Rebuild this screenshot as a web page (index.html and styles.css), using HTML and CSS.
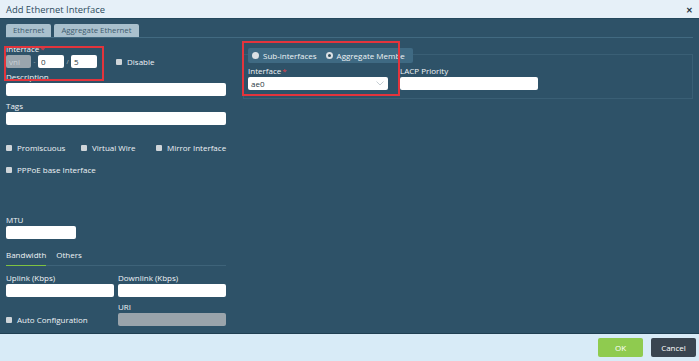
FILE: index.html
```html
<!DOCTYPE html>
<html lang="en">

<head>
    <meta charset="UTF-8">
    <meta name="viewport" content="width=device-width, initial-scale=1.0">
    <title>Add Ethernet Interface</title>
    <link rel="stylesheet" href="styles.css">
</head>

<body>
    <div class="dialog">
        <div class="dialog-header">
            <span class="title">Add Ethernet Interface</span>
            <span class="close">&#10005;</span>
        </div>

        <div class="dialog-body">
            <div class="tabs">
                <span class="tab">Ethernet</span>
                <span class="tab">Aggregate Ethernet</span>
            </div>

            <div class="columns">
                <div class="left-col">
                    <label class="field-label first">Interface<span class="req">*</span></label>
                    <div class="iface-row">
                        <input class="box vni" type="text" value="vni" disabled>
                        <span class="sep">-</span>
                        <input class="box short" type="text" value="0">
                        <span class="sep">/</span>
                        <input class="box short" type="text" value="5">
                        <span class="check disable"><span class="tick"></span>Disable</span>
                    </div>

                    <label class="field-label desc">Description</label>
                    <input class="box wide" type="text">

                    <label class="field-label">Tags</label>
                    <input class="box wide" type="text">

                    <div class="check-row">
                        <span class="check w75"><span class="tick"></span>Promiscuous</span>
                        <span class="check w75"><span class="tick"></span>Virtual Wire</span>
                        <span class="check"><span class="tick"></span>Mirror Interface</span>
                    </div>
                    <div class="check-row second">
                        <span class="check"><span class="tick"></span>PPPoE base Interface</span>
                    </div>

                    <label class="field-label mtu">MTU</label>
                    <input class="box mtu-input" type="text">

                    <div class="subtabs">
                        <span class="subtab active">Bandwidth</span>
                        <span class="subtab">Others</span>
                    </div>

                    <div class="grid2">
                        <div>
                            <label class="field-label bw">Uplink (Kbps)</label>
                            <input class="box full" type="text">
                        </div>
                        <div>
                            <label class="field-label bw">Downlink (Kbps)</label>
                            <input class="box full" type="text">
                        </div>
                        <div class="auto">
                            <span class="check"><span class="tick"></span>Auto Configuration</span>
                        </div>
                        <div>
                            <label class="field-label">URI</label>
                            <input class="box full grey" type="text" disabled>
                        </div>
                    </div>
                </div>

                <div class="right-col">
                    <div class="member-box">
                        <div class="radio-bar">
                            <span class="radio"><span class="dot"></span>Sub-interfaces</span>
                            <span class="radio"><span class="dot on"></span>Aggregate Membe</span>
                        </div>
                        <div class="member-fields">
                            <div>
                                <label class="field-label">Interface<span class="req">*</span></label>
                                <div class="select">
                                    <span>ae0</span>
                                    <svg width="8" height="5" viewBox="0 0 8 5"><path d="M0.5 0.5 L4 4 L7.5 0.5" fill="none" stroke="#b8c2c8" stroke-width="0.8"/></svg>
                                </div>
                            </div>
                            <div>
                                <label class="field-label">LACP Priority</label>
                                <input class="box lacp" type="text">
                            </div>
                        </div>
                    </div>
                </div>
            </div>
        </div>

        <div class="dialog-footer">
            <button class="btn ok">OK</button>
            <button class="btn cancel">Cancel</button>
        </div>

        <div class="mark mark-left"></div>
        <div class="mark mark-right"></div>
    </div>
</body>

</html>
```

FILE: styles.css
```css
body {
    margin: 0;
    padding: 0;
    font-family: "Open Sans", "Noto Sans", sans-serif;
    font-size: 8px;
    background: #2e5268;
}

.dialog {
    position: relative;
    width: 699px;
    height: 361px;
    display: flex;
    flex-direction: column;
    overflow: hidden;
}

.dialog-header {
    height: 19px;
    background: #e6f0f8;
    display: flex;
    align-items: center;
    justify-content: space-between;
    padding: 0 6px;
    box-sizing: border-box;
    border-bottom: 1px solid #24485d;
}

.title {
    font-size: 9.4px;
    color: #2e4c60;
}

.close {
    font-size: 8px;
    font-weight: bold;
    color: #233440;
}

.dialog-body {
    flex: 1;
    background: #2e5268;
    padding: 5px 6px 0;
    color: #e9eff3;
}

.tabs {
    display: flex;
    gap: 3px;
    border-bottom: 1px solid #426a81;
}

.tab {
    background: #a9c0cd;
    color: #3e5b6d;
    font-size: 7.8px;
    height: 13px;
    line-height: 13px;
    padding: 0 7px;
    border-radius: 2px 2px 0 0;
}

.columns {
    display: flex;
}

.left-col {
    width: 220px;
    flex-shrink: 0;
    display: flex;
    flex-direction: column;
}

.field-label {
    display: block;
    font-size: 8px;
    line-height: 10px;
    height: 10px;
    margin-top: 5px;
    color: #eef3f6;
    white-space: nowrap;
}

.field-label.first {
    margin-top: 6px;
}

.field-label.desc {
    margin-top: 4px;
}

.req {
    color: #e0404a;
    margin-left: 1px;
}

.box {
    box-sizing: border-box;
    height: 13px;
    border: none;
    border-radius: 2px;
    background: #ffffff;
    font-family: inherit;
    font-size: 8px;
    color: #2b3a44;
    padding: 0 3px;
    margin: 0;
    display: block;
}

.wide {
    width: 220px;
    margin-top: 1px;
}

.iface-row {
    display: flex;
    align-items: center;
    margin-top: 1px;
}

.vni {
    width: 25px;
    background: #9aa5ad;
    color: #c9d1d6;
}

.short {
    width: 26px;
}

.sep {
    width: 7px;
    text-align: center;
    font-size: 6px;
    color: #b9c6cf;
}

.check {
    display: inline-flex;
    align-items: center;
    font-size: 8px;
    line-height: 10px;
    color: #eef3f6;
    white-space: nowrap;
    flex-shrink: 0;
}

.tick {
    width: 6px;
    height: 6px;
    background: #cfd5d9;
    border-radius: 1px;
    margin-right: 5px;
}

.disable {
    margin-left: 19px;
}

.check-row {
    display: flex;
    margin-top: 18px;
}

.check-row.second {
    margin-top: 12px;
}

.w75 {
    width: 75px;
}

.mtu {
    margin-top: 40px;
}

.mtu-input {
    width: 70px;
    margin-top: 1px;
}

.subtabs {
    display: flex;
    gap: 10px;
    margin-top: 11px;
    border-bottom: 1px solid #3e6379;
}

.subtab {
    font-size: 8px;
    line-height: 10px;
    padding-bottom: 5px;
    color: #eef3f6;
}

.subtab.active {
    border-bottom: 1px solid #7fc241;
    margin-bottom: -1px;
}

.grid2 {
    display: grid;
    grid-template-columns: 108px 108px;
    column-gap: 4px;
}

.full {
    width: 108px;
    margin-top: 1px;
}

.grid2 .field-label {
    margin-top: 5px;
}

.grid2 .field-label.bw {
    margin-top: 7px;
}

.auto {
    display: flex;
    align-items: flex-end;
    padding-bottom: 1px;
}

.grey {
    background: #9aa4ab;
}

.right-col {
    flex: 1;
    margin-left: 17px;
    padding-top: 16px;
}

.member-box {
    border: 1px solid #3a5f75;
    height: 45px;
    box-sizing: border-box;
    padding: 0 4px;
}

.radio-bar {
    display: flex;
    width: fit-content;
    align-items: center;
    gap: 9px;
    background: #3f6a83;
    height: 15px;
    padding: 0 8px 0 4px;
    margin-top: -7px;
    border-radius: 2px;
}

.radio {
    display: inline-flex;
    align-items: center;
    font-size: 8px;
    color: #eef3f6;
}

.dot {
    width: 7px;
    height: 7px;
    border-radius: 50%;
    background: #dbe1e5;
    margin-right: 4px;
    box-sizing: border-box;
}

.dot.on {
    border: 2px solid #dbe1e5;
    background: #33505f;
}

.member-fields {
    display: flex;
    gap: 12px;
}

.member-fields .field-label {
    margin-top: 3px;
}

.select {
    width: 140px;
    height: 13px;
    box-sizing: border-box;
    background: #ffffff;
    border-radius: 2px;
    margin-top: 1px;
    display: flex;
    align-items: center;
    justify-content: space-between;
    padding: 0 4px 0 3px;
    color: #2b3a44;
}

.lacp {
    width: 138px;
    margin-top: 1px;
}

.dialog-footer {
    height: 28px;
    background: #d8ebf7;
    border-top: 1px solid #1f3f52;
    display: flex;
    align-items: center;
    justify-content: flex-end;
    gap: 8px;
    padding-right: 3px;
    box-sizing: border-box;
}

.btn {
    width: 45px;
    height: 19px;
    border: none;
    border-radius: 2px;
    font-family: inherit;
    font-size: 8px;
    color: #ffffff;
}

.ok {
    background: #8fcb4f;
}

.cancel {
    background: #394550;
}

.mark {
    position: absolute;
    border: 2px solid #e3343c;
    box-sizing: border-box;
}

.mark-left {
    left: 4px;
    top: 46px;
    width: 100px;
    height: 35px;
}

.mark-right {
    left: 242px;
    top: 41px;
    width: 158px;
    height: 55px;
}
```
